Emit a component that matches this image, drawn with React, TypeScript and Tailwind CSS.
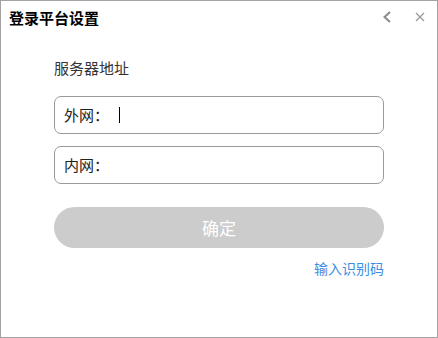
import React from 'react';

export default function App() {
  return (
    <div
      className="w-[438px] h-[338px] bg-white border border-[#a3a3a3] flex flex-col"
      style={{ fontFamily: '"Microsoft YaHei", "Noto Sans CJK SC", sans-serif' }}
    >
      {/* title bar */}
      <div className="flex items-center h-[32px] pl-[8px] pr-[12px]">
        <h1 className="text-[15px] font-bold text-black leading-none">登录平台设置</h1>
        <div className="ml-auto flex items-center gap-[23px]">
          <svg width="10" height="12" viewBox="0 0 10 12" className="text-[#8a8a8a]">
            <path d="M8 1 L2.5 6 L8 11" fill="none" stroke="currentColor" strokeWidth="2" />
          </svg>
          <svg width="10" height="10" viewBox="0 0 10 10" className="text-[#9a9a9a]">
            <path d="M1 1 L9 9 M9 1 L1 9" fill="none" stroke="currentColor" strokeWidth="1.3" />
          </svg>
        </div>
      </div>

      <div className="flex flex-col px-[53px] pt-[25px]">
        <p className="text-[15px] text-[#333] leading-[20px]">服务器地址</p>

        <div className="mt-[18px] h-[38px] rounded-[7px] border border-[#9a9a9a] flex items-center pl-[9px]">
          <span className="text-[15px] text-[#222]">外网：</span>
          <span className="ml-[10px] w-px h-[16px] bg-black" />
        </div>

        <div className="mt-[12px] h-[38px] rounded-[7px] border border-[#9a9a9a] flex items-center pl-[9px]">
          <span className="text-[15px] text-[#222]">内网：</span>
        </div>

        <button className="mt-[23px] h-[41px] rounded-full bg-[#cccccc] text-white text-[17px]">
          确定
        </button>

        <div className="mt-[11px] flex justify-end">
          <a className="text-[14px] text-[#3a8fe0] leading-[18px]">输入识别码</a>
        </div>
      </div>
    </div>
  );
}
